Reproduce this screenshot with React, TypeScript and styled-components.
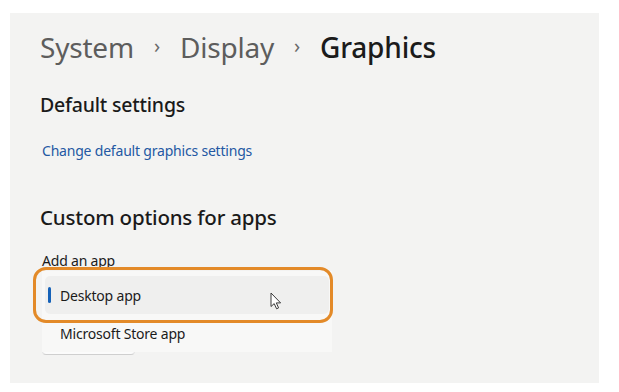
import styled, { createGlobalStyle } from 'styled-components';

const GlobalStyle = createGlobalStyle`
	html, body {
		margin: 0;
		padding: 0;
		background: #ffffff;
		font-family: 'Noto Sans', 'Open Sans', sans-serif;
	}
`;

const Page = styled.div`
	width: 619px;
	height: 392px;
	padding: 13px 0 0 10px;
	box-sizing: border-box;
`;

const Panel = styled.div`
	width: 589px;
	height: 370px;
	background: #f3f3f2;
	padding: 16px 30px 0 30px;
	box-sizing: border-box;
	display: flex;
	flex-direction: column;
`;

const Breadcrumb = styled.div`
	display: flex;
	align-items: center;
	gap: 20px;
	font-size: 28px;
	line-height: 36px;
	letter-spacing: -0.2px;
`;

const Crumb = styled.span<{ $current?: boolean }>`
	color: ${(p) => (p.$current ? '#1b1b1b' : '#5d5d5d')};
	font-weight: ${(p) => (p.$current ? 500 : 400)};
`;

const Chevron = styled.span`
	color: #6a6a6a;
	font-size: 20px;
	margin-top: -3px;
`;

const Heading = styled.h2<{ $top: number; $size: number }>`
	margin: ${(p) => p.$top}px 0 0 0;
	font-size: ${(p) => p.$size}px;
	line-height: 26px;
	font-weight: 500;
	color: #1a1a1a;
	letter-spacing: -0.2px;
`;

const Link = styled.a`
	margin: 23px 0 0 2px;
	font-size: 14px;
	line-height: 20px;
	color: #2358a3;
	text-decoration: none;
	letter-spacing: -0.2px;
`;

const AddArea = styled.div`
	position: relative;
	margin: 21px 0 0 2px;
`;

const Label = styled.div`
	font-size: 14px;
	line-height: 20px;
	color: #1b1b1b;
	letter-spacing: -0.2px;
`;

const AddButton = styled.div`
	margin-top: 4px;
	width: 93px;
	height: 80px;
	background: #fbfbfb;
	border: 1px solid #e3e3e3;
	border-bottom-color: #cfcfcf;
	border-radius: 4px;
	box-sizing: border-box;
`;

const Menu = styled.div`
	position: absolute;
	left: 0;
	top: 20px;
	width: 290px;
	height: 81px;
	background: #f8f8f7;
	padding: 5px 3px;
	box-sizing: border-box;
	display: flex;
	flex-direction: column;
`;

const MenuItem = styled.div<{ $selected?: boolean }>`
	position: relative;
	flex: 0 0 38px;
	display: flex;
	align-items: center;
	padding-left: 15px;
	border-radius: 5px;
	font-size: 14px;
	color: #1b1b1b;
	letter-spacing: -0.2px;
	background: ${(p) => (p.$selected ? '#efefee' : 'transparent')};

	&::before {
		content: '';
		display: ${(p) => (p.$selected ? 'block' : 'none')};
		position: absolute;
		left: 3px;
		top: 11px;
		width: 3px;
		height: 16px;
		border-radius: 2px;
		background: #1662b8;
	}
`;

const Highlight = styled.div`
	position: absolute;
	left: -9px;
	top: 16px;
	width: 300px;
	height: 56px;
	border: 3px solid #e38a28;
	border-radius: 13px;
	box-sizing: border-box;
	pointer-events: none;
`;

const Cursor = styled.svg`
	position: absolute;
	left: 228px;
	top: 41px;
`;

export default function App() {
	return (
		<>
			<GlobalStyle />
			<Page>
				<Panel>
					<Breadcrumb>
						<Crumb>System</Crumb>
						<Chevron>›</Chevron>
						<Crumb>Display</Crumb>
						<Chevron>›</Chevron>
						<Crumb $current>Graphics</Crumb>
					</Breadcrumb>
					<Heading $top={27} $size={19.5}>
						Default settings
					</Heading>
					<Link href="#">Change default graphics settings</Link>
					<Heading $top={43} $size={20.5}>
						Custom options for apps
					</Heading>
					<AddArea>
						<Label>Add an app</Label>
						<AddButton />
						<Menu>
							<MenuItem $selected>Desktop app</MenuItem>
							<MenuItem>Microsoft Store app</MenuItem>
						</Menu>
						<Highlight />
						<Cursor width="12" height="18" viewBox="0 0 12 18">
							<path
								d="M1 1 L1 14.5 L4.2 11.6 L6.6 16.8 L8.6 15.9 L6.3 10.9 L10.6 10.9 Z"
								fill="#ffffff"
								stroke="#3a3a3a"
								strokeWidth="1"
								strokeLinejoin="round"
							/>
						</Cursor>
					</AddArea>
				</Panel>
			</Page>
		</>
	);
}
